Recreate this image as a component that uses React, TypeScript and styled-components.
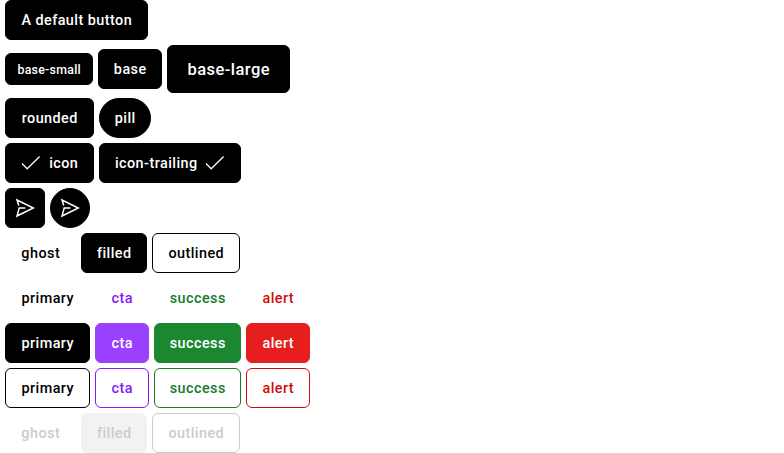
import React from "react";
import styled, { createGlobalStyle, css } from "styled-components";

const GlobalStyle = createGlobalStyle`
  body { margin: 0; background: #fff; overflow: hidden; }
`;

type Size = "small" | "base" | "large";
type Variant = "ghost" | "filled" | "outlined";
type Tone = "primary" | "cta" | "success" | "alert" | "disabled";

const tones: Record<Tone, { text: string; fill: string; onFill: string; line: string }> = {
  primary: { text: "#000", fill: "#000", onFill: "#fff", line: "#000" },
  cta: { text: "#8519ff", fill: "#9a40ff", onFill: "#fff", line: "#8519ff" },
  success: { text: "#197a2b", fill: "#1c8731", onFill: "#fff", line: "#197a2b" },
  alert: { text: "#cf0c0d", fill: "#e61e1e", onFill: "#fff", line: "#cf0c0d" },
  disabled: { text: "#ccc", fill: "#f2f2f2", onFill: "#ccc", line: "#ccc" },
};

const sizes = {
  small: css`height: 32px; font-size: 12.3px; letter-spacing: 0.3px;`,
  base: css`height: 40px; font-size: 14.4px; letter-spacing: 0.45px;`,
  large: css`height: 48px; font-size: 16.5px; letter-spacing: 0.45px;`,
};

const Page = styled.main`
  display: flex;
  flex-direction: column;
  gap: 5px;
  padding-left: 5px;
`;

const Row = styled.div`
  display: flex;
  align-items: center;
  gap: 5px;
`;

const Button = styled.button<{
  $width: number;
  $size?: Size;
  $variant?: Variant;
  $tone?: Tone;
  $radius?: number;
}>`
  display: inline-flex;
  align-items: center;
  justify-content: center;
  gap: 8px;
  box-sizing: border-box;
  flex: none;
  width: ${(p) => p.$width}px;
  padding: 0;
  border: 1px solid transparent;
  border-radius: ${(p) => p.$radius ?? 6}px;
  font-family: Roboto, "Liberation Sans", sans-serif;
  font-weight: 500;
  line-height: 20px;
  white-space: nowrap;
  ${(p) => sizes[p.$size ?? "base"]}
  ${({ $variant = "filled", $tone = "primary" }) => {
    const t = tones[$tone];
    if ($variant === "filled") return css`background: ${t.fill}; border-color: ${t.fill}; color: ${t.onFill};`;
    return css`
      background: transparent;
      color: ${t.text};
      border-color: ${$variant === "outlined" ? t.line : "transparent"};
    `;
  }}
`;

const Label = styled.span`
  padding-top: 2px;
  margin-right: -0.5px;
`;

const Icon = styled.svg`
  display: block;
  flex: none;
  width: 20px;
  height: 20px;
  fill: none;
  stroke: currentColor;
  stroke-width: 1.25;
`;

const SendIcon = styled(Icon)`
  stroke-width: 1.5;
`;

const Check = () => (
  <Icon viewBox="0 0 20 20">
    <path d="M1 10.5 6.2 15.8 18.6 3.5" />
  </Icon>
);

const Send = () => (
  <SendIcon viewBox="0 0 20 20">
    <path d="M10.4 10H4.2L2 18 18.3 10 2 2 3.8 7.5" />
  </SendIcon>
);

const App = () => (
  <>
    <GlobalStyle />
    <Page>
      <Row>
        <Button $width={143}><Label>A default button</Label></Button>
      </Row>
      <Row>
        <Button $width={88} $size="small"><Label>base-small</Label></Button>
        <Button $width={64}><Label>base</Label></Button>
        <Button $width={123} $size="large"><Label>base-large</Label></Button>
      </Row>
      <Row>
        <Button $width={89}><Label>rounded</Label></Button>
        <Button $width={52} $radius={20}><Label>pill</Label></Button>
      </Row>
      <Row>
        <Button $width={89}><Check /><Label>icon</Label></Button>
        <Button $width={142}><Label>icon-trailing</Label><Check /></Button>
      </Row>
      <Row>
        <Button $width={40} aria-label="Send"><Send /></Button>
        <Button $width={40} $radius={20} aria-label="Send"><Send /></Button>
      </Row>
      <Row>
        <Button $width={71} $variant="ghost"><Label>ghost</Label></Button>
        <Button $width={66}><Label>filled</Label></Button>
        <Button $width={88} $variant="outlined"><Label>outlined</Label></Button>
      </Row>
      {(["ghost", "filled", "outlined"] as Variant[]).map((v) => (
        <Row key={v}>
          <Button $width={85} $variant={v}><Label>primary</Label></Button>
          <Button $width={54} $variant={v} $tone="cta"><Label>cta</Label></Button>
          <Button $width={87} $variant={v} $tone="success"><Label>success</Label></Button>
          <Button $width={64} $variant={v} $tone="alert"><Label>alert</Label></Button>
        </Row>
      ))}
      <Row>
        <Button disabled $width={71} $variant="ghost" $tone="disabled"><Label>ghost</Label></Button>
        <Button disabled $width={66} $tone="disabled"><Label>filled</Label></Button>
        <Button disabled $width={88} $variant="outlined" $tone="disabled"><Label>outlined</Label></Button>
      </Row>
    </Page>
  </>
);

export default App;
